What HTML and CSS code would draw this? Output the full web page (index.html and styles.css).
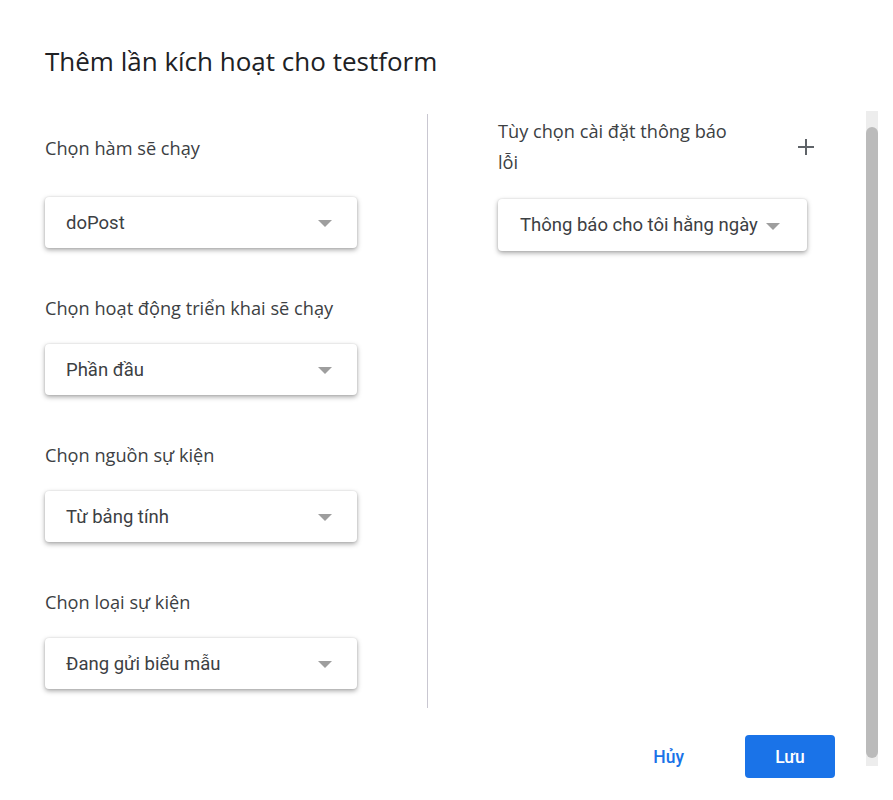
FILE: index.html
```html
<!DOCTYPE html>
<html lang="vi">
<head>
<meta charset="utf-8">
<link rel="stylesheet" href="styles.css">
</head>
<body>
<div class="dialog">
  <h1 class="title">Thêm lần kích hoạt cho testform</h1>
  <div class="content">
    <div class="col-left">
      <div class="label first">Chọn hàm sẽ chạy</div>
      <div class="select"><span>doPost</span><span class="arrow"></span></div>
      <div class="label">Chọn hoạt động triển khai sẽ chạy</div>
      <div class="select"><span>Phần đầu</span><span class="arrow"></span></div>
      <div class="label">Chọn nguồn sự kiện</div>
      <div class="select"><span>Từ bảng tính</span><span class="arrow"></span></div>
      <div class="label">Chọn loại sự kiện</div>
      <div class="select"><span>Đang gửi biểu mẫu</span><span class="arrow"></span></div>
    </div>
    <div class="col-right">
      <div class="notify-head">
        <div class="notify-label">Tùy chọn cài đặt thông báo lỗi</div>
        <svg class="plus" width="18" height="18" viewBox="0 0 18 18"><path d="M9 1v16M1 9h16" stroke="#5f6368" stroke-width="2" fill="none"/></svg>
      </div>
      <div class="select wide"><span>Thông báo cho tôi hằng ngày</span><span class="arrow"></span></div>
    </div>
  </div>
  <div class="actions">
    <button class="btn-text">Hủy</button>
    <button class="btn-primary">Lưu</button>
  </div>
  <div class="scrollbar"><div class="thumb"></div></div>
</div>
</body>
</html>
```
FILE: styles.css
```css
html, body {
  margin: 0;
  padding: 0;
  background: #fff;
}
body {
  font-family: "Open Sans", "Noto Sans", sans-serif;
  color: #202124;
}
.dialog {
  position: relative;
  width: 893px;
  height: 800px;
  padding-left: 45px;
  box-sizing: border-box;
}
.title {
  margin: 0;
  padding-top: 45px;
  font-size: 26px;
  line-height: 32px;
  font-weight: 400;
  color: #202124;
}
.content {
  display: flex;
  margin-top: 37px;
  height: 594px;
}
.col-left {
  width: 383px;
  border-right: 1px solid #c9c7d1;
  box-sizing: border-box;
}
.label {
  font-size: 18.2px;
  line-height: 24px;
  color: #3c4043;
  margin-top: 48px;
  margin-bottom: 24px;
}
.label.first {
  margin-top: 22px;
  margin-bottom: 37px;
}
.select {
  width: 312px;
  height: 51px;
  box-sizing: border-box;
  background: #fff;
  border-radius: 4px;
  box-shadow: 0 2px 5px rgba(0,0,0,0.35), 0 0 2px rgba(0,0,0,0.12);
  display: flex;
  align-items: center;
  justify-content: space-between;
  padding: 0 25px 0 21px;
  font-family: Roboto, sans-serif;
  font-size: 18.5px;
  color: #3c4043;
}
.arrow {
  width: 0;
  height: 0;
  border-left: 7px solid transparent;
  border-right: 7px solid transparent;
  border-top: 7px solid #9e9e9e;
  margin-top: 2px;
}
.col-right {
  padding-left: 70px;
  padding-top: 2px;
}
.notify-head {
  display: flex;
  align-items: center;
  width: 317px;
}
.notify-label {
  width: 240px;
  font-size: 18.2px;
  line-height: 31px;
  color: #3c4043;
}
.plus {
  margin-left: auto;
  margin-top: -1px;
}
.select.wide {
  width: 309px;
  height: 52px;
  margin-top: 21px;
  padding: 0 27px 0 22px;
}
.actions {
  display: flex;
  justify-content: flex-end;
  align-items: center;
  gap: 61px;
  margin-top: 27px;
  padding-right: 58px;
}
.btn-text {
  border: none;
  background: none;
  color: #1a73e8;
  font-family: Roboto, sans-serif;
  font-size: 17.5px;
  font-weight: 500;
  padding: 0;
}
.btn-primary {
  border: none;
  background: #1a73e8;
  color: #fff;
  font-family: Roboto, sans-serif;
  font-size: 17.5px;
  font-weight: 500;
  width: 90px;
  height: 43px;
  border-radius: 4px;
}
.scrollbar {
  position: absolute;
  left: 866px;
  top: 111px;
  width: 12px;
  height: 655px;
  background: #ededed;
}
.thumb {
  margin-top: 16px;
  height: 631px;
  background: #bbbbbb;
  border-radius: 6px;
}
```
